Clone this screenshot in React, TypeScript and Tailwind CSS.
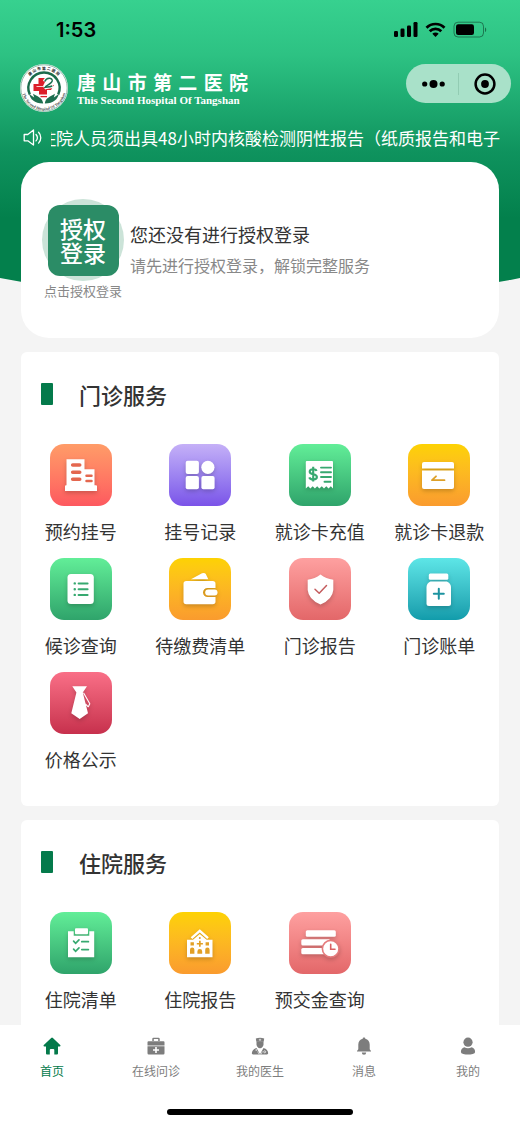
import clsx from 'clsx'
import React, { ReactNode, useState } from 'react'

type Service = {
  label: string
  tile: string
  icon: ReactNode
}

const ORANGE = 'from-[#ff9c68] to-[#fd585f]'
const PURPLE = 'from-[#c5b0f7] to-[#7b53e8]'
const GREEN = 'from-[#62ee98] to-[#2fa46b]'
const YELLOW = 'from-[#fdd202] to-[#fa9b2e]'
const CORAL = 'from-[#fea0a0] to-[#e36769]'
const TEAL = 'from-[#5de6e7] to-[#119cab]'
const RED = 'from-[#f96f87] to-[#c7304d]'

const outpatient: Service[] = [
  { label: '预约挂号', tile: ORANGE, icon: <BuildingIcon /> },
  { label: '挂号记录', tile: PURPLE, icon: <AppsIcon /> },
  { label: '就诊卡充值', tile: GREEN, icon: <ReceiptIcon /> },
  { label: '就诊卡退款', tile: YELLOW, icon: <RefundIcon /> },
  { label: '候诊查询', tile: GREEN, icon: <ListIcon /> },
  { label: '待缴费清单', tile: YELLOW, icon: <WalletIcon /> },
  { label: '门诊报告', tile: CORAL, icon: <ShieldIcon /> },
  { label: '门诊账单', tile: TEAL, icon: <BottleIcon /> },
  { label: '价格公示', tile: RED, icon: <TieIcon /> }
]

const inpatient: Service[] = [
  { label: '住院清单', tile: GREEN, icon: <ClipboardIcon /> },
  { label: '住院报告', tile: YELLOW, icon: <HospitalIcon /> },
  { label: '预交金查询', tile: CORAL, icon: <DepositIcon /> }
]

const tabs = [
  { label: '首页', icon: <HomeIcon /> },
  { label: '在线问诊', icon: <KitIcon /> },
  { label: '我的医生', icon: <DoctorIcon /> },
  { label: '消息', icon: <BellIcon /> },
  { label: '我的', icon: <UserIcon /> }
]

export default function App() {
  return (
    <div className="flex h-screen flex-col bg-[#f4f4f4] font-['Noto_Sans_CJK_SC',sans-serif] text-[#333]">
      <main className="relative min-h-0 flex-1 overflow-y-auto [scrollbar-width:none]">
        <HeaderBackground />
        <div className="relative flex flex-col">
          <StatusBar />
          <TopBar />
          <Notice />
          <div className="flex flex-col gap-[14px] px-[21px]">
            <LoginCard />
            <ServiceCard title="门诊服务" services={outpatient} />
            <ServiceCard title="住院服务" services={inpatient} />
          </div>
        </div>
      </main>
      <TabBar />
    </div>
  )
}

function HeaderBackground() {
  return (
    <svg
      className="absolute inset-x-0 top-0 h-[304px] w-full"
      viewBox="0 0 520 304"
      preserveAspectRatio="none"
      aria-hidden="true"
    >
      <defs>
        <linearGradient id="header" x1="0" y1="0" x2="0" y2="1">
          <stop offset="0" stopColor="#37d18f" />
          <stop offset="0.18" stopColor="#2dc283" />
          <stop offset="0.5" stopColor="#0f935e" />
          <stop offset="0.72" stopColor="#03804c" />
          <stop offset="1" stopColor="#03804c" />
        </linearGradient>
      </defs>
      <path d="M0 0H520V278Q260 328 0 278Z" fill="url(#header)" />
    </svg>
  )
}

function StatusBar() {
  return (
    <div className="flex h-[60px] items-center justify-between pr-8 pl-14 text-black">
      <span className="font-[Inter,sans-serif] text-[20px] font-semibold">1:53</span>
      <svg className="h-5 w-[96px]" viewBox="0 0 96 20" aria-hidden="true">
        <rect x="2" y="11" width="4" height="6" rx="1.2" />
        <rect x="8.5" y="8.5" width="4" height="8.5" rx="1.2" />
        <rect x="15" y="5.5" width="4" height="11.5" rx="1.2" />
        <rect x="21.5" y="2" width="4" height="15" rx="1.2" />
        <g fill="none" stroke="#000" strokeWidth="2.7">
          <path d="M34.5 7.8a12.6 12.6 0 0 1 18 0" />
          <path d="M37.7 11.3a8.2 8.2 0 0 1 11.6 0" />
        </g>
        <path d="M43.5 17l-3.2-3.2a4.6 4.6 0 0 1 6.4 0z" />
        <rect x="62" y="2.2" width="29.5" height="14.8" rx="4" fill="none" stroke="#000" strokeOpacity="0.4" />
        <rect x="64" y="4.2" width="18" height="10.8" rx="2.2" />
        <path d="M93 7.5v4.5c1.6-.6 1.6-3.9 0-4.5z" fillOpacity="0.45" />
      </svg>
    </div>
  )
}

function TopBar() {
  return (
    <header className="mt-1 flex h-[50px] items-start justify-between pr-[9px] pl-5">
      <div className="flex items-center gap-[9px]">
        <Emblem />
        <div className="flex w-[171px] flex-col text-white">
          <h1 className="flex justify-between text-[19px] leading-6 font-bold">
            {[...'唐山市第二医院'].map((char) => (
              <span key={char}>{char}</span>
            ))}
          </h1>
          <p className="font-['Liberation_Serif',serif] text-[11px] leading-3 font-bold whitespace-nowrap">
            This Second Hospital Of Tangshan
          </p>
        </div>
      </div>
      <div className="flex h-[39px] w-[105px] items-center rounded-full bg-[#a9e1c9]">
        <button type="button" aria-label="更多" className="flex flex-1 justify-center">
          <svg className="h-6 w-7" viewBox="0 0 28 24">
            <circle cx="6.7" cy="12" r="2.6" />
            <circle cx="15.5" cy="12" r="4" />
            <circle cx="24.2" cy="12" r="2.6" />
          </svg>
        </button>
        <span className="h-[22px] w-px bg-[#92ccb3]" />
        <button type="button" aria-label="关闭" className="flex flex-1 justify-center">
          <svg className="h-6 w-6" viewBox="0 0 24 24">
            <circle cx="12" cy="12" r="9.4" fill="none" stroke="#000" strokeWidth="2.5" />
            <circle cx="12" cy="12" r="3.9" />
          </svg>
        </button>
      </div>
    </header>
  )
}

function Emblem() {
  return (
    <svg className="h-12 w-12" viewBox="0 0 48 48" aria-hidden="true">
      <defs>
        <path id="emblem-top" d="M5.5 24a18.5 18.5 0 0 1 37 0" />
        <path id="emblem-bottom" d="M2.4 20a22 22 0 1 0 43.2 0" />
      </defs>
      <circle cx="24" cy="24" r="24" fill="#fff" />
      <circle cx="24" cy="24" r="23.2" fill="none" stroke="#4b8a70" strokeWidth="0.6" />
      <text fontSize="3.8" fontWeight="700" fill="#222">
        <textPath href="#emblem-top" startOffset="50%" textAnchor="middle">
          唐 山 市 第 二 医 院
        </textPath>
      </text>
      <text fontSize="4" fontWeight="700" fill="#444" fontFamily="Liberation Serif, serif">
        <textPath href="#emblem-bottom" startOffset="50%" textAnchor="middle">
          The Second Hospital Of Tangshan
        </textPath>
      </text>
      <path d="M9.8 30.5A15.6 15.6 0 1 1 38.2 30.5" fill="none" stroke="#1a6b4c" strokeWidth="2.4" />
      <path d="M18.5 14H25v4l-2 4h4l7-1-3 5h-4v4.5h-8V27h-5.5v-7h5z" fill="#dc1f2a" />
      <path d="M24.5 17.5c1-4 8.5-5 8.3-.8-.2 3-5.8 4.6-8.3 7.3 3-1.4 5.6-.2 8.6-1.8" fill="none" stroke="#fff" strokeWidth="3.2" />
      <path d="M24.8 17.5c1.5-4 7.8-4.3 7.4-.6-.4 2.6-5.4 4.2-8 6.6 3-1 5 0 8-1.5" fill="none" stroke="#1d6f50" strokeWidth="1.5" />
      <path d="M16.5 22.5h8.5" stroke="#fff" strokeWidth="0.8" />
      <path d="M20.5 32.6h6.5" stroke="#dc1f2a" strokeWidth="1.3" />
      <path d="M23.2 39.5c-.5-4.5-4-6.5-8-8.5l-2.2-1.2 1.2 3.6-5-3.4c1 5 5 9.3 14 9.5zM24.8 39.5c.5-4.5 4-6.5 8-8.5l2.2-1.2-1.2 3.6 5-3.4c-1 5-5 9.3-14 9.5z" fill="#1d6f50" />
    </svg>
  )
}

function Notice() {
  return (
    <div className="flex h-12 items-center gap-2 pr-5 pl-[23px] text-white">
      <svg
        className="h-5 w-5 shrink-0"
        viewBox="0 0 20 20"
        fill="none"
        stroke="currentColor"
        strokeWidth="1.3"
        aria-hidden="true"
      >
        <path d="M1.2 6.5h3.6L10.5 2v15L4.8 12.8H1.2z" strokeLinejoin="round" />
        <path d="M13 6.5c1.6 1.8 1.6 4.6 0 6.4M15.6 4.3c2.9 3 2.9 7.8 0 10.8" strokeLinecap="round" />
      </svg>
      <p className="flex min-w-0 flex-1 justify-end overflow-hidden text-[17px] leading-6 whitespace-nowrap">
        <span>住院人员须出具48小时内核酸检测阴性报告（纸质报告和电子</span>
      </p>
    </div>
  )
}

function LoginCard() {
  return (
    <section className="flex h-44 items-start gap-[6px] rounded-[28px] bg-white pt-[37px] pl-[21px]">
      <button type="button" className="flex flex-col items-center">
        <span className="flex h-[82px] w-[82px] items-center justify-center rounded-full bg-[#cbe3d8]">
          <span className="flex h-[71px] w-[71px] flex-col items-center justify-center rounded-xl bg-[#2b8c66] text-[23px] leading-6 font-medium text-white">
            <span>授权</span>
            <span>登录</span>
          </span>
        </span>
        <span className="text-[13px] leading-5 text-[#888]">点击授权登录</span>
      </button>
      <div className="flex flex-col gap-[3px] pt-[21px]">
        <h2 className="text-[18px] leading-7">您还没有进行授权登录</h2>
        <p className="text-[16px] leading-7 text-[#888]">请先进行授权登录，解锁完整服务</p>
      </div>
    </section>
  )
}

function ServiceCard({ title, services }: { title: string; services: Service[] }) {
  return (
    <section className="rounded-md bg-white pt-[26px] pb-[34px]">
      <div className="flex items-center gap-[26px] pl-5">
        <span className="h-[22px] w-3 rounded-[1px] bg-[#047a4b]" />
        <h2 className="text-[22px] leading-8 font-medium">{title}</h2>
      </div>
      <div className="mt-[34px] grid grid-cols-4 gap-y-[14px]">
        {services.map(({ label, tile, icon }) => (
          <button key={label} type="button" className="flex flex-col items-center gap-3">
            <span className={clsx('h-[62px] w-[62px] rounded-[14px] bg-linear-to-b', tile)}>{icon}</span>
            <span className="text-[18px] leading-[26px] whitespace-nowrap">{label}</span>
          </button>
        ))}
      </div>
    </section>
  )
}

function TabBar() {
  const [active, setActive] = useState(0)

  return (
    <footer className="flex flex-col items-center bg-white pb-[10px]">
      <nav className="grid w-full grid-cols-5">
        {tabs.map(({ label, icon }, index) => (
          <button
            key={label}
            type="button"
            onClick={() => setActive(index)}
            className={clsx(
              'flex flex-col items-center gap-[6px] pt-3 pb-7',
              index === active ? 'text-[#047a4b]' : 'text-[#7d7d7d]'
            )}
          >
            {icon}
            <span className="text-[12px] leading-5">{label}</span>
          </button>
        ))}
      </nav>
      <span className="h-[6px] w-[186px] rounded-full bg-black" />
    </footer>
  )
}

function TileIcon({ children }: { children: ReactNode }) {
  return (
    <svg
      className="h-full w-full drop-shadow-[0_2px_2px_rgba(0,0,0,0.2)]"
      viewBox="0 0 62 62"
      fill="#fff"
      aria-hidden="true"
    >
      {children}
    </svg>
  )
}

function BuildingIcon() {
  return (
    <TileIcon>
      <path d="M16.5 15.2H34.5V25.3H44.5V41.3H46a1 1 0 0 1 1 1V47H15V42.3a1 1 0 0 1 1-1h.5z" />
      <g stroke="#e4674f" strokeLinecap="round">
        <path d="M22.7 21h7M22.7 28.2h7M22.7 35.3h7" strokeWidth="3.6" />
        <path d="M36.5 31.8h5M36.5 37h5" strokeWidth="2.5" />
      </g>
    </TileIcon>
  )
}

function AppsIcon() {
  return (
    <TileIcon>
      <rect x="16.7" y="16.7" width="13.2" height="13.2" rx="2" />
      <circle cx="38.9" cy="23.3" r="6.6" />
      <rect x="16.7" y="32" width="13.2" height="13.2" rx="2" />
      <rect x="32.4" y="32" width="13.2" height="13.2" rx="2" />
    </TileIcon>
  )
}

function ReceiptIcon() {
  return (
    <TileIcon>
      <path d="M17.8 17H43a1 1 0 0 1 1 1V44.5L41.8 42.3 39.5 44.5 37.3 42.3 35 44.5 32.8 42.3 30.4 44.5 28.2 42.3 25.9 44.5 23.7 42.3 21.4 44.5 19.2 42.3 16.8 44.5V18a1 1 0 0 1 1-1z" />
      <g fill="none" stroke="#38a870" strokeWidth="1.9">
        <path d="M27.5 27c-.8-2.4-6.8-2.4-6.8.7 0 3.6 7.2 1.6 7.2 5.3 0 3.2-6.6 3.3-7.6.4M24.2 22.8v14.6" strokeWidth="2.1" />
        <path d="M32 23.6h10M32 28.3h10M32 33h10M35.5 37.8h6" strokeLinecap="round" />
      </g>
    </TileIcon>
  )
}

function RefundIcon() {
  return (
    <TileIcon>
      <path d="M16 18H44a2 2 0 0 1 2 2V24.6H14V20a2 2 0 0 1 2-2z" />
      <path d="M14 26.5H46V43a2 2 0 0 1-2 2H16a2 2 0 0 1-2-2z" />
      <path d="M36.5 36.2H24L28 32.3" fill="none" stroke="#dda028" strokeWidth="1.8" strokeLinecap="round" strokeLinejoin="round" />
    </TileIcon>
  )
}

function ListIcon() {
  return (
    <TileIcon>
      <rect x="17.5" y="16" width="26.3" height="30" rx="3.5" />
      <g stroke="#37a970" strokeWidth="2" strokeLinecap="round">
        <path d="M24.7 25.4h.1M24.7 31.3h.1M24.7 36.9h.1" strokeWidth="2.4" />
        <path d="M28.6 25.4h9M28.6 31.3h9M28.6 36.9h9" />
      </g>
    </TileIcon>
  )
}

function WalletIcon() {
  return (
    <TileIcon>
      <path d="M22 21.2L33 15.3q2.6-1 3.8.8L39.3 21.2z" />
      <path
        fillRule="evenodd"
        d="M17.3 23H43.7a2.8 2.8 0 0 1 2.8 2.8V30H38.5a4.5 4.5 0 0 0 0 9H46.5V43.5a2.8 2.8 0 0 1-2.8 2.8H17.3a2.8 2.8 0 0 1-2.8-2.8V25.8a2.8 2.8 0 0 1 2.8-2.8z"
      />
      <rect x="36.2" y="31.6" width="12.3" height="5.8" rx="2.9" />
    </TileIcon>
  )
}

function ShieldIcon() {
  return (
    <TileIcon>
      <path d="M31.5 16.5Q37 20.8 44.3 21.8V32Q43.5 41.5 31.5 46.5 19.5 41.5 18.7 32V21.8Q26 20.8 31.5 16.5z" />
      <path d="M26 31.3L30.2 35.2 37.5 27.6" fill="none" stroke="#c45b5d" strokeWidth="1.5" strokeLinecap="round" strokeLinejoin="round" />
    </TileIcon>
  )
}

function BottleIcon() {
  return (
    <TileIcon>
      <rect x="20.8" y="15.6" width="19.5" height="6.2" rx="1.5" />
      <path d="M22.5 23.4H38.8Q42.8 25 43 29V45.5a2.5 2.5 0 0 1-2.5 2.5H21a2.5 2.5 0 0 1-2.5-2.5V29Q18.6 25 22.5 23.4z" />
      <path d="M30.8 30.8v10M25.8 35.8h10" fill="none" stroke="#1c93a0" strokeWidth="2" strokeLinecap="round" />
    </TileIcon>
  )
}

function TieIcon() {
  return (
    <TileIcon>
      <path d="M22.3 14.2H37L32.8 20.5 38 41.3 29.7 47 21.3 41.3 26.4 20.5z" />
      <path d="M33.5 20.8L39.8 31.8 38.3 34.8 35.4 32" fill="none" stroke="#fff" strokeWidth="1.1" strokeLinejoin="round" />
    </TileIcon>
  )
}

function ClipboardIcon() {
  return (
    <TileIcon>
      <path d="M18 19.2H23.7V23.7H39.3V19.2H44.2V45.3H18z" />
      <rect x="25" y="16.3" width="13" height="6" rx="1" />
      <g fill="none" stroke="#37a970" strokeWidth="1.7" strokeLinecap="round">
        <path d="M23.6 29.2L25.6 31.3 29 27.8M23.6 37.2L25.6 39.3 29 35.8" />
        <path d="M31.8 29.7h6.6M31.8 37.6h6.6" />
      </g>
    </TileIcon>
  )
}

function HospitalIcon() {
  return (
    <TileIcon>
      <path d="M22.5 26.2L30.8 18.9 39 26.2" fill="none" stroke="#fff" strokeWidth="2.4" />
      <path d="M18 27.8H24L30.8 22 37.6 27.8H43.5V45.3H18z" />
      <g fill="#e2a026">
        <path d="M21.5 30.2h3.4v3.2h-3.4zM36.6 30.2H40v3.2h-3.4z" />
        <path d="M30 28.7h1.7v2.2h2.2v1.7h-2.2v2.2H30v-2.2h-2.2v-1.7H30z" />
        <circle cx="30.8" cy="26" r="1" />
        <path d="M21 41.7V37.7a2.2 2.2 0 0 1 4.4 0v4zM28.4 41.7V39.5a2.4 2.4 0 0 1 4.8 0v2.2zM36.2 41.7V37.7a2.2 2.2 0 0 1 4.4 0v4z" />
      </g>
    </TileIcon>
  )
}

function DepositIcon() {
  return (
    <TileIcon>
      <rect x="16.8" y="18.2" width="30" height="6.5" rx="1.5" />
      <rect x="12.3" y="27.2" width="29" height="6.3" rx="1.5" />
      <rect x="12.3" y="36" width="27" height="6.3" rx="1.5" />
      <circle cx="41.7" cy="36.7" r="8.3" stroke="#e57c7d" strokeWidth="1.6" />
      <path d="M41.7 32.3v4.9h4.3" fill="none" stroke="#d96264" strokeWidth="1.6" strokeLinecap="round" />
    </TileIcon>
  )
}

function TabIcon({ children }: { children: ReactNode }) {
  return (
    <svg className="h-[18px] w-[18px]" viewBox="0 0 18 18" fill="currentColor" aria-hidden="true">
      {children}
    </svg>
  )
}

function HomeIcon() {
  return (
    <TabIcon>
      <path d="M8.2 1a1.2 1.2 0 0 1 1.7 0L17.2 8.1c.6.6.3 1.3-.5 1.3H15V16.5a1 1 0 0 1-1 1h-2.7V13a1 1 0 0 0-1-1H7.8a1 1 0 0 0-1 1v4.5H4a1 1 0 0 1-1-1V9.4H1.3C.5 9.4.3 8.7.8 8.1z" />
    </TabIcon>
  )
}

function KitIcon() {
  return (
    <TabIcon>
      <path d="M5.3 4V1.8A1.2 1.2 0 0 1 6.5.7h5a1.2 1.2 0 0 1 1.2 1.1V4h-1.5V2.1H6.8V4z" />
      <path d="M1.5 4.2H16.5a1 1 0 0 1 1 1V8.6H.5V5.2a1 1 0 0 1 1-1z" />
      <path fillRule="evenodd" d="M.5 9.2H17.5V16.2a1.2 1.2 0 0 1-1.2 1.2H1.7A1.2 1.2 0 0 1 .5 16.2zM8.2 10v2.2H6v1.6h2.2V16h1.6v-2.2H12v-1.6H9.8V10z" />
    </TabIcon>
  )
}

function DoctorIcon() {
  return (
    <TabIcon>
      <path d="M4.8 1.5Q9 0 13.2 1.5L12.7 4.5H5.3z" />
      <path d="M5.5 4.2h7V7.3c0 2.2-1.6 4-3.5 4s-3.5-1.8-3.5-4z" />
      <path d="M5.5 11L9 17.2 12.5 11q4.5 1.3 4.7 5.3 0 1.1-1.2 1.1H2q-1.2 0-1.2-1.1Q1 12.3 5.5 11z" />
      <path d="M7.8 2.8h2.4M9 1.7v2.2" stroke="#fff" strokeWidth="0.6" />
      <path d="M5.2 12v2" fill="none" stroke="#fff" strokeWidth="0.8" />
      <path d="M8 17.4L6.6 14.5M10 17.4L11.4 14.5" fill="none" stroke="#fff" strokeWidth="0.6" />
      <circle cx="13.7" cy="14.8" r="1" fill="none" stroke="#fff" strokeWidth="0.7" />
    </TabIcon>
  )
}

function BellIcon() {
  return (
    <TabIcon>
      <path d="M9 .5a1.2 1.2 0 0 1 1.3 1.3C13 2.5 14.7 4.7 14.7 7.5v4.8l1.3 1.6v.6H2v-.6l1.3-1.6V7.5c0-2.8 1.7-5 4.4-5.7A1.2 1.2 0 0 1 9 .5z" />
      <path d="M6.8 15.5h4.4a2.2 2.2 0 0 1-4.4 0z" />
    </TabIcon>
  )
}

function UserIcon() {
  return (
    <TabIcon>
      <circle cx="9" cy="5.2" r="4.6" />
      <path d="M5.3 10.2q3.7 2 7.4 0 3.4 1.2 3.4 4.7 0 1.3-2.3 2-4.8 1.1-9.6 0-2.3-.7-2.3-2 0-3.5 3.4-4.7z" />
    </TabIcon>
  )
}
